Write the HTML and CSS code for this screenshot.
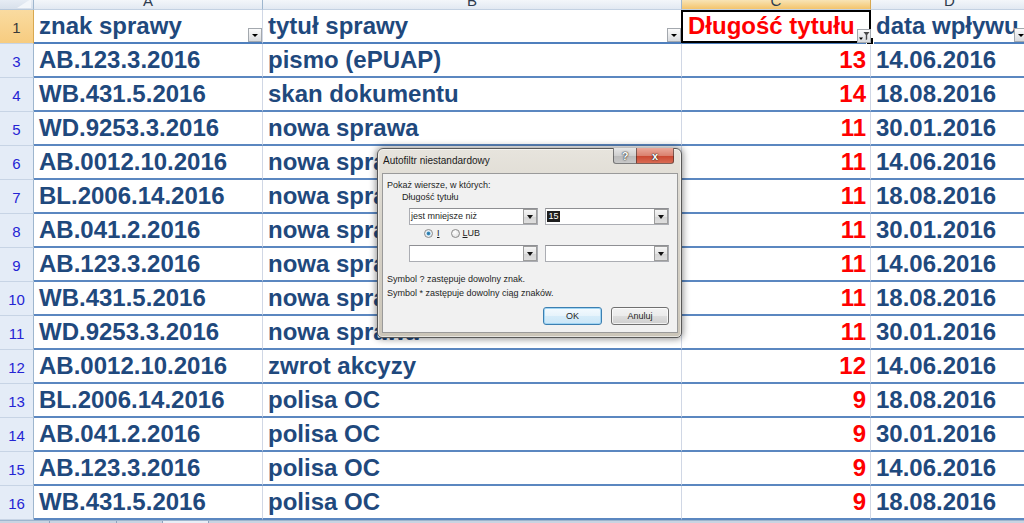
FILE: index.html
```html
<!DOCTYPE html>
<html lang="pl">
<head>
<meta charset="utf-8">
<title>Autofiltr niestandardowy</title>
<link rel="stylesheet" href="styles.css">
</head>
<body>
<div class="sheet">
  <div class="corner"></div>
  <div class="ch"><span>A</span></div>
  <div class="ch"><span>B</span></div>
  <div class="ch sel"><span>C</span></div>
  <div class="ch"><span>D</span></div>

  <div class="rh sel">1</div>
  <div class="c hd">znak sprawy<span class="dd"></span></div>
  <div class="c hd">tytuł sprawy<span class="dd"></span></div>
  <div class="c hd red active">Długość tytułu<span class="dd flt"><svg width="12" height="12" viewBox="0 0 12 12"><path d="M1 7.5h4l-2 2.5z" fill="#000"/><path d="M5.5 2h6l-2.3 3v4.2l-1.4 1V5z" fill="#4a4a4a"/></svg></span></div>
  <div class="c hd">data wpływu<span class="dd"></span></div>

  <div class="rh">3</div><div class="c">AB.123.3.2016</div><div class="c">pismo (ePUAP)</div><div class="c num">13</div><div class="c">14.06.2016</div>
  <div class="rh">4</div><div class="c">WB.431.5.2016</div><div class="c">skan dokumentu</div><div class="c num">14</div><div class="c">18.08.2016</div>
  <div class="rh">5</div><div class="c">WD.9253.3.2016</div><div class="c">nowa sprawa</div><div class="c num">11</div><div class="c">30.01.2016</div>
  <div class="rh">6</div><div class="c">AB.0012.10.2016</div><div class="c">nowa sprawa</div><div class="c num">11</div><div class="c">14.06.2016</div>
  <div class="rh">7</div><div class="c">BL.2006.14.2016</div><div class="c">nowa sprawa</div><div class="c num">11</div><div class="c">18.08.2016</div>
  <div class="rh">8</div><div class="c">AB.041.2.2016</div><div class="c">nowa sprawa</div><div class="c num">11</div><div class="c">30.01.2016</div>
  <div class="rh">9</div><div class="c">AB.123.3.2016</div><div class="c">nowa sprawa</div><div class="c num">11</div><div class="c">14.06.2016</div>
  <div class="rh">10</div><div class="c">WB.431.5.2016</div><div class="c">nowa sprawa</div><div class="c num">11</div><div class="c">18.08.2016</div>
  <div class="rh">11</div><div class="c">WD.9253.3.2016</div><div class="c">nowa sprawa</div><div class="c num">11</div><div class="c">30.01.2016</div>
  <div class="rh">12</div><div class="c">AB.0012.10.2016</div><div class="c">zwrot akcyzy</div><div class="c num">12</div><div class="c">14.06.2016</div>
  <div class="rh">13</div><div class="c">BL.2006.14.2016</div><div class="c">polisa OC</div><div class="c num">9</div><div class="c">18.08.2016</div>
  <div class="rh">14</div><div class="c">AB.041.2.2016</div><div class="c">polisa OC</div><div class="c num">9</div><div class="c">30.01.2016</div>
  <div class="rh">15</div><div class="c">AB.123.3.2016</div><div class="c">polisa OC</div><div class="c num">9</div><div class="c">14.06.2016</div>
  <div class="rh">16</div><div class="c">WB.431.5.2016</div><div class="c">polisa OC</div><div class="c num">9</div><div class="c">18.08.2016</div>
</div>
<div class="tabs"><span class="t1"></span><span class="t2"></span><span class="t3"></span><span class="t4"></span></div>

<div class="dlg">
  <div class="tbar">
    <div class="ttl">Autofiltr niestandardowy</div>
    <div class="ctl"><span class="help">?</span><span class="close">x</span></div>
  </div>
  <div class="cl">
    <div class="ln">Pokaż wiersze, w których:</div>
    <div class="ln grp">Długość tytułu</div>
    <div class="crow first">
      <div class="combo w1"><span class="val">jest mniejsze niż</span><span class="btn"></span></div>
      <div class="combo w2"><span class="val"><span class="hl">15</span></span><span class="btn"></span></div>
    </div>
    <div class="rrow">
      <span class="radio on"></span><span class="rl"><u>I</u></span>
      <span class="radio"></span><span class="rl"><u>L</u>UB</span>
    </div>
    <div class="crow second">
      <div class="combo w1"><span class="val"></span><span class="btn"></span></div>
      <div class="combo w2"><span class="val"></span><span class="btn"></span></div>
    </div>
    <div class="sym">Symbol ? zastępuje dowolny znak.</div>
    <div class="sym">Symbol * zastępuje dowolny ciąg znaków.</div>
    <div class="brow">
      <span class="pb ok">OK</span>
      <span class="pb">Anuluj</span>
    </div>
  </div>
</div>
</body>
</html>
```

FILE: styles.css
```css
* { box-sizing: border-box; }
html, body { margin: 0; padding: 0; }
body {
  width: 1024px;
  height: 523px;
  overflow: hidden;
  position: relative;
  background: #fff;
  font-family: "Liberation Sans", Arial, sans-serif;
}

.sheet {
  display: grid;
  grid-template-columns: 34px 229px 419px 189px 158px;
  grid-template-rows: 10px;
  grid-auto-rows: 34px;
  width: 1029px;
}

.corner {
  position: relative;
  background: linear-gradient(#e6ecf4, #d8e0eb);
  border-right: 1px solid #9eb6ce;
  border-bottom: 1px solid #b8c8da;
  overflow: hidden;
}
.corner::after {
  content: "";
  position: absolute;
  right: 2px;
  bottom: 1px;
  border-left: 14px solid transparent;
  border-bottom: 9px solid #f3f6fa;
}

.ch {
  background: linear-gradient(#f3f6fa, #e2e9f2);
  border-right: 1px solid #9eb6ce;
  border-bottom: 1px solid #c3d1e2;
  overflow: hidden;
  text-align: center;
  font-size: 15px;
  line-height: 2px;
  color: #2d3b4e;
}
.ch.sel {
  background: linear-gradient(#f8e4b6, #f3c46c);
  border-right-color: #d8a850;
}

.rh {
  background: #e4ecf7;
  border-right: 1px solid #9eb6ce;
  border-bottom: 1px solid #c7d4e5;
  text-align: center;
  font-size: 15px;
  line-height: 30px;
  padding-top: 3px;
  color: #2424d4;
}
.rh.sel {
  background: linear-gradient(#f9dba0, #f7cc80);
  border-right-color: #d8a850;
  color: #3a3a3a;
}

.c {
  position: relative;
  border-right: 1px solid #d0d7e5;
  border-bottom: 2px solid #5b87c0;
  padding: 1px 4px 0 5px;
  font-size: 24px;
  font-weight: bold;
  line-height: 30px;
  color: #1f497d;
  white-space: nowrap;
  overflow: hidden;
}
.c.hd { border-bottom-color: #4f7fbd; }
.c.red { color: #ff0000; padding-left: 6px; }
.c.num { text-align: right; color: #ff0000; }

.c.active { overflow: visible; z-index: 2; }
.c.active::before {
  content: "";
  position: absolute;
  left: -1px;
  top: 0;
  right: -1px;
  bottom: -1px;
  border: 2px solid #000;
}
.c.active::after {
  content: "";
  position: absolute;
  right: -4px;
  bottom: -3px;
  width: 6px;
  height: 6px;
  background: #000;
  border: 1px solid #fff;
}

.dd {
  position: absolute;
  right: 0;
  bottom: 0;
  width: 14px;
  height: 14px;
  border: 1px solid #a3a8ae;
  background: linear-gradient(#fbfbfb, #d9dbde);
  z-index: 1;
}
.dd::after {
  content: "";
  position: absolute;
  left: 3px;
  top: 5px;
  border-left: 3px solid transparent;
  border-right: 3px solid transparent;
  border-top: 3px solid #000;
}
.dd.flt { right: -1px; bottom: -1px; }
.dd.flt::after { display: none; }
.dd.flt svg { display: block; }

.tabs {
  height: 3px;
  background: #c9d4e2;
  border-top: 1px solid #9eb6ce;
  display: flex;
}
.tabs span { display: block; height: 2px; border-right: 1px solid #8da2bd; }
.tabs .t1 { width: 50px; }
.tabs .t2 { width: 67px; }
.tabs .t3 { width: 46px; }
.tabs .t4 { width: 46px; background: #e8eef6; }

/* dialog */
.dlg {
  position: absolute;
  left: 377px;
  top: 148px;
  width: 305px;
  height: 190px;
  border: 1px solid #585858;
  border-radius: 6px 6px 5px 5px;
  background: linear-gradient(180deg, #e7e4dd 0, #d9d5cc 35%, #cbc5b8 100%);
  box-shadow: 0 0 7px 1px rgba(0, 0, 0, .45), inset 0 0 0 1px rgba(255, 255, 255, .55);
  display: flex;
  flex-direction: column;
  padding: 0 3px 4px 4px;
  font-family: "Liberation Sans", Arial, sans-serif;
  color: #1e1e1e;
}
.tbar {
  height: 24px;
  display: flex;
  align-items: flex-start;
}
.ttl {
  font-size: 10px;
  line-height: 12px;
  padding: 6px 0 0 1px;
  color: #1a1a1a;
}
.ctl {
  margin-left: auto;
  margin-right: 4px;
  margin-top: -1px;
  display: flex;
}
.ctl span {
  height: 16px;
  display: flex;
  align-items: center;
  justify-content: center;
  font-size: 11px;
  font-weight: bold;
  color: #fff;
  text-shadow: 0 0 2px #333, 0 0 1px #000;
  border: 1px solid rgba(40, 40, 40, .55);
  border-top: none;
}
.help {
  width: 23px;
  background: linear-gradient(#e6e6e6, #cfcfcf 50%, #b9b9b9 51%, #c8c8c8);
  border-radius: 0 0 0 3px;
  border-right: none !important;
}
.close {
  width: 38px;
  background: linear-gradient(#eaa99b, #db8270 50%, #c9452f 51%, #d96b53);
  border-radius: 0 0 3px 0;
}

.cl {
  flex: 1;
  background: #f1f1f1;
  border: 1px solid #9a9a9a;
  padding: 5px 8px 0 4px;
  font-size: 9px;
}
.ln { line-height: 12px; white-space: nowrap; }
.grp { padding-left: 15px; }

.crow { display: flex; gap: 7px; margin-left: 22px; }
.crow.first { margin-top: 5px; }
.crow.second { margin-top: 6px; }
.combo {
  height: 17px;
  background: #fff;
  border: 1px solid #abadb3;
  border-top-color: #8e8f93;
  display: flex;
  align-items: stretch;
}
.combo.w1 { width: 130px; }
.combo.w2 { width: 124px; }
.val {
  flex: 1;
  padding-left: 1px;
  display: flex;
  align-items: center;
  line-height: 11px;
  white-space: nowrap;
}
.hl {
  background: #1f1f1f;
  color: #fff;
  padding: 0 1px;
  line-height: 11px;
}
.btn {
  width: 14px;
  position: relative;
  border: 1px solid #9c9c9c;
  background: linear-gradient(#f5f5f5, #e4e4e4 50%, #d4d4d4 51%, #dedede);
}
.btn::after {
  content: "";
  position: absolute;
  left: 3px;
  top: 5px;
  border-left: 3px solid transparent;
  border-right: 3px solid transparent;
  border-top: 4px solid #111;
}

.rrow {
  display: flex;
  align-items: center;
  height: 12px;
  margin: 2px 0 0 37px;
}
.radio {
  width: 9px;
  height: 9px;
  border-radius: 50%;
  border: 1px solid #8a8a8a;
  background: radial-gradient(circle at 40% 35%, #fff, #d9d9d9);
}
.radio.on {
  background: radial-gradient(circle, #2b6f9a 0, #3d8fc0 30%, #d4e6f2 45%, #f4f4f4 70%);
}
.rl { margin: 0 11px 0 4px; line-height: 12px; }
.rl:last-child { margin-left: 3px; }

.sym { line-height: 14px; white-space: nowrap; }
.crow.second + .sym { margin-top: 10px; }

.brow {
  display: flex;
  justify-content: flex-end;
  gap: 9px;
  margin-top: 7px;
}
.pb {
  width: 58px;
  height: 18px;
  display: flex;
  align-items: center;
  justify-content: center;
  border: 1px solid #707070;
  border-radius: 3px;
  background: linear-gradient(#f2f2f2, #ebebeb 50%, #dddddd 51%, #cfcfcf);
  box-shadow: inset 0 0 0 1px rgba(255, 255, 255, .7);
  font-size: 9px;
  color: #1e1e1e;
}
.pb.ok {
  width: 59px;
  border-color: #3c7fb1;
  background: linear-gradient(#f4fafe, #e6f3fb 50%, #d6ecf9 51%, #cbe6f7);
  box-shadow: inset 0 0 0 1px #9fd4f3;
}
```
